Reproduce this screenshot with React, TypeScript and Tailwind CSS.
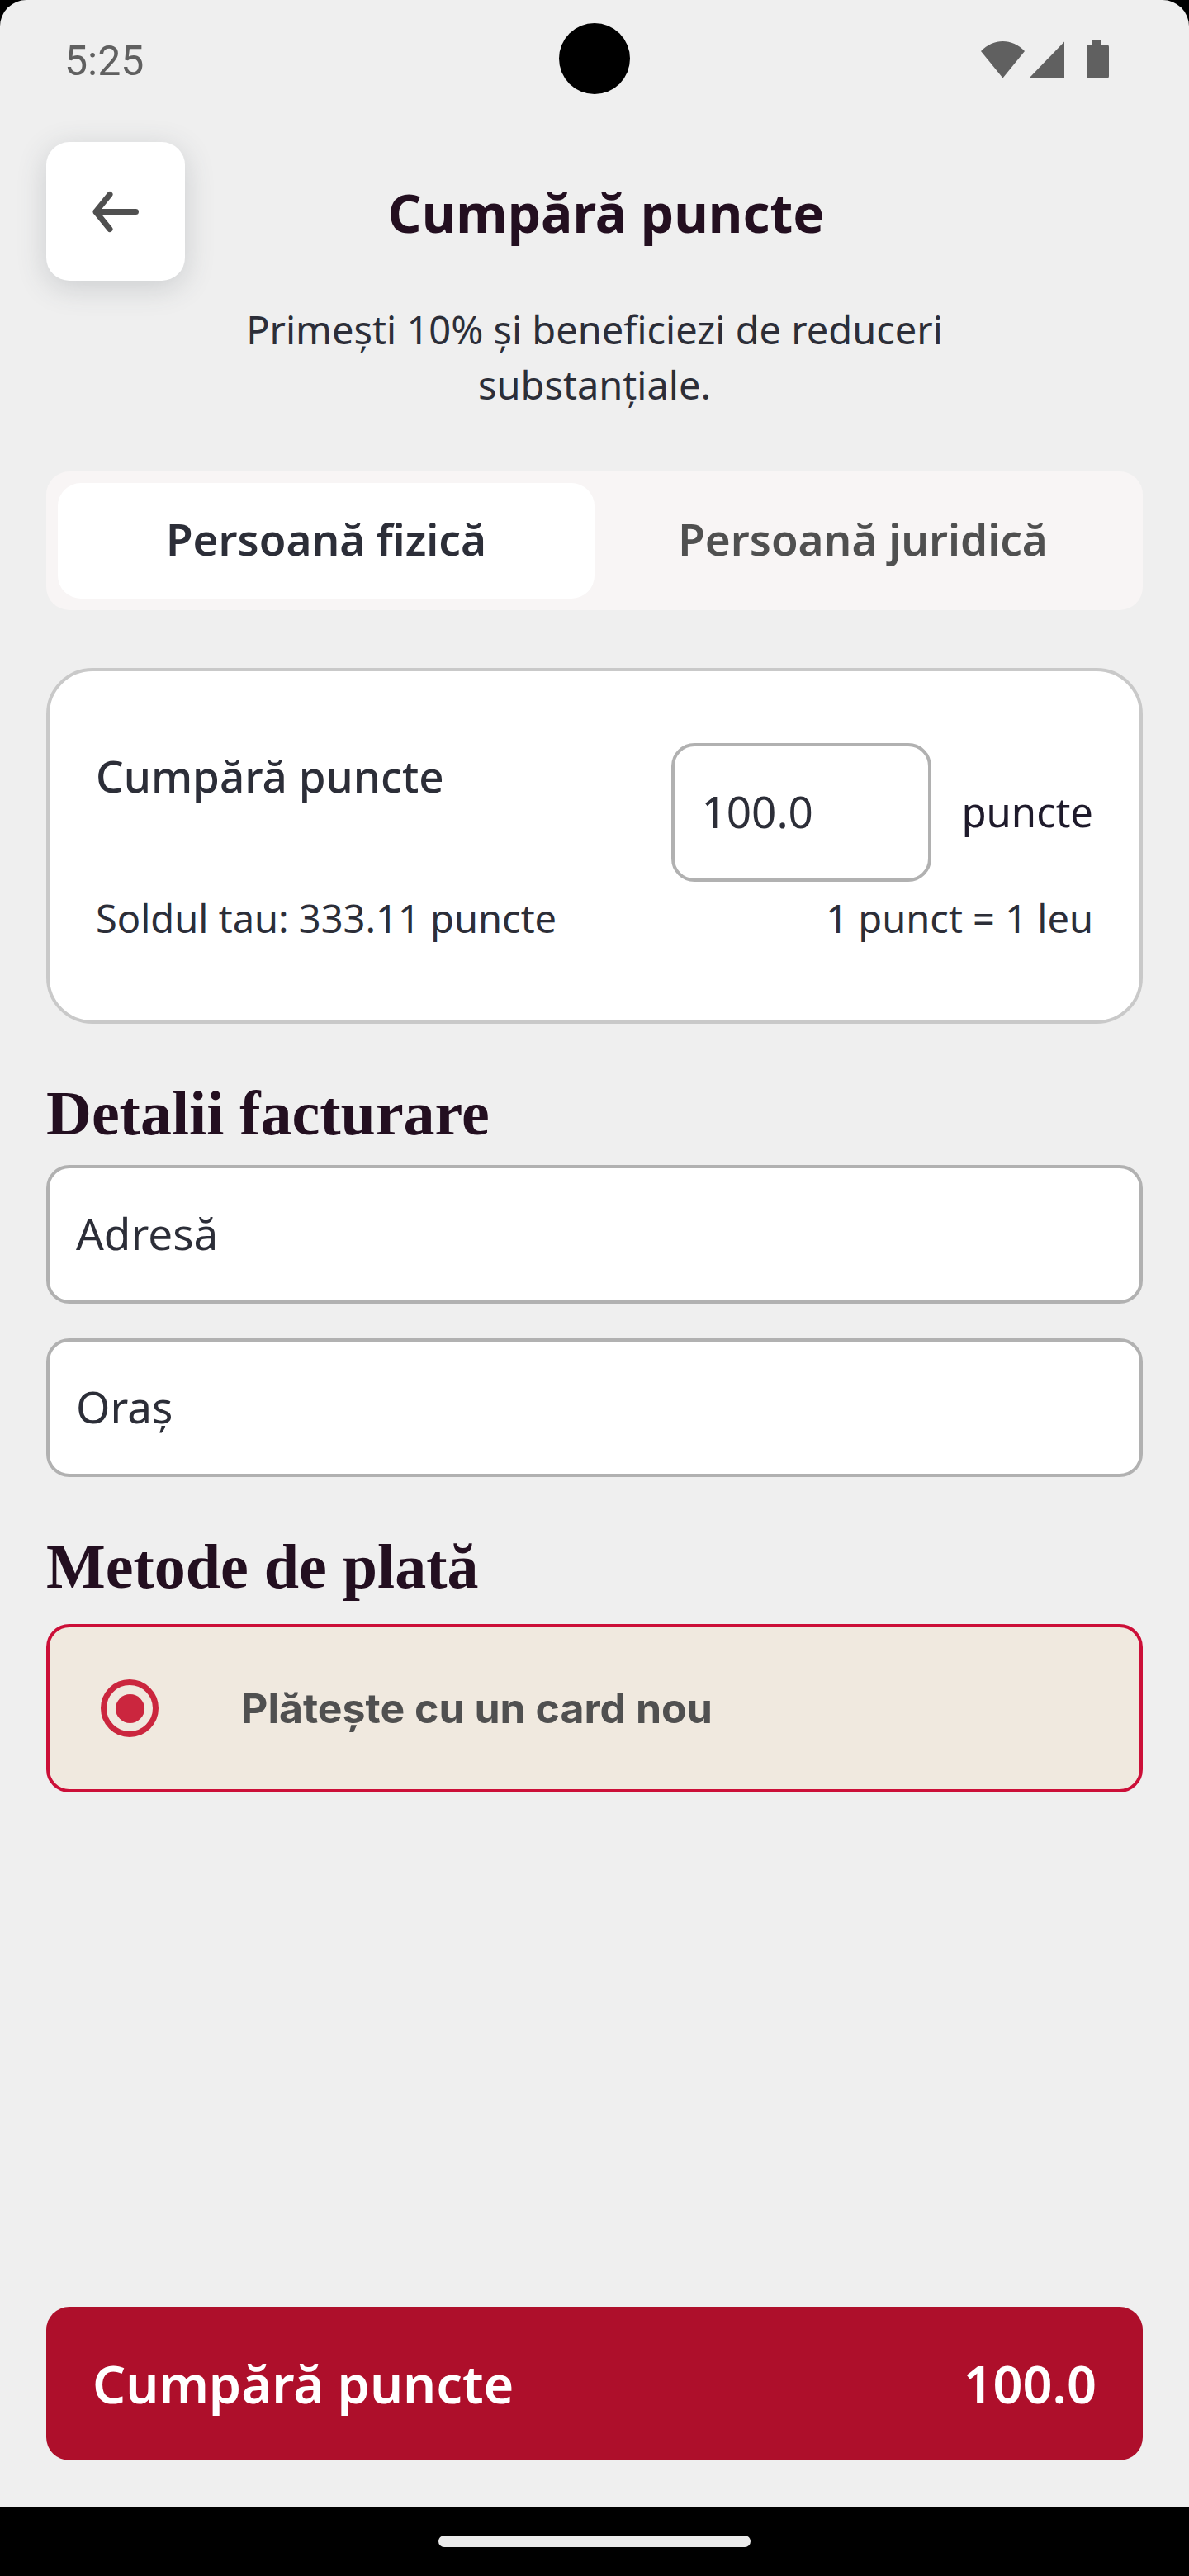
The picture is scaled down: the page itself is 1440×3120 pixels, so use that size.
import React from 'react';
import { clsx } from 'clsx';

type ClientType = 'fizica' | 'juridica';

const clientTypes: { key: ClientType; label: string }[] = [
  { key: 'fizica', label: 'Persoană fizică' },
  { key: 'juridica', label: 'Persoană juridică' },
];

const StatusBar: React.FC = () => (
  <div className="relative flex h-36 items-center justify-between pl-[78px] pr-24 text-[#606060]">
    <span className="pt-1 font-['Roboto',sans-serif] text-[50px] leading-[58px]">5:25</span>
    <div className="absolute left-1/2 top-7 size-[86px] -translate-x-1/2 rounded-full bg-black" />
    <svg width="156" height="46" viewBox="0 0 156 46" fill="currentColor" aria-hidden="true">
      <path d="M0 13C15-3 38-3 53 13L26.500 45.500Z" />
      <path d="M101 1.500V46H58Z" />
      <path d="M134 0h12v5h6a3 3 0 0 1 3 3v35a3 3 0 0 1-3 3h-21a3 3 0 0 1-3-3V8a3 3 0 0 1 3-3h3z" />
    </svg>
  </div>
);

const SectionTitle: React.FC<{ children: React.ReactNode }> = ({ children }) => (
  <h2 className="mt-[66px] font-['Liberation_Serif',serif] text-[76px] font-bold leading-[84px] text-[#230f20]">
    {children}
  </h2>
);

const fieldClass =
  'h-[168px] rounded-[28px] border-4 border-[#b1b1b1] bg-white pb-1 text-[53px] text-[#2c2e38] outline-none placeholder:text-[#2c2e38]';

export default function App() {
  const [clientType, setClientType] = React.useState<ClientType>('fizica');
  const [amount, setAmount] = React.useState('100.0');
  const [address, setAddress] = React.useState('');
  const [city, setCity] = React.useState('');

  return (
    <div className="flex min-h-screen flex-col bg-black font-['Noto_Sans',sans-serif] text-[#2c2e38]">
      <div className="flex flex-1 flex-col rounded-t-[32px] bg-[#efefef]">
        <StatusBar />

        <main className="flex flex-1 flex-col px-14 pb-14 pt-7">
          <header className="flex items-center">
            <button
              type="button"
              aria-label="Înapoi"
              className="flex size-[168px] items-center justify-center rounded-[28px] bg-white text-[#505050] shadow-[0_8px_36px_rgba(60,70,80,0.2)]"
            >
              <svg width="56" height="56" viewBox="0 0 56 56" fill="none" stroke="currentColor" strokeWidth="7" strokeLinecap="round" strokeLinejoin="round" aria-hidden="true">
                <path d="M52.500 28.500H4M21 7.500L4 28.500L21 49.500" />
              </svg>
            </button>
            <h1 className="mr-[140px] flex-1 pt-1 text-center text-[64px] font-bold leading-[84px] text-[#230f20]">
              Cumpără puncte
            </h1>
          </header>

          <p className="mx-auto mt-[26px] max-w-[960px] text-center text-[47px] leading-[67px]">
            Primești 10% și beneficiezi de reduceri substanțiale.
          </p>

          <div className="mt-[71px] grid grid-cols-2 rounded-[28px] bg-[#f8f5f5] p-3.5">
            {clientTypes.map((type) => (
              <button
                key={type.key}
                type="button"
                aria-pressed={clientType === type.key}
                onClick={() => setClientType(type.key)}
                className={clsx(
                  'h-[140px] rounded-[28px] pb-1 text-[53px] font-semibold leading-[72px]',
                  clientType === type.key ? 'bg-white text-[#2c2e38]' : 'text-[#505050]'
                )}
              >
                {type.label}
              </button>
            ))}
          </div>

          <section className="mt-[70px] rounded-[56px] border-4 border-[#c9c9c9] bg-white px-14 pb-[92px] pt-[87px]">
            <div className="flex items-start justify-between">
              <label htmlFor="amount" className="pt-1 text-[53px] font-medium leading-[72px]">
                Cumpără puncte
              </label>
              <div className="flex items-center gap-9 text-[49px] text-[#1e1a2b]">
                <input
                  id="amount"
                  inputMode="decimal"
                  value={amount}
                  onChange={(e) => setAmount(e.target.value)}
                  className={clsx(fieldClass, 'w-[315px] px-8')}
                />
                <span>puncte</span>
              </div>
            </div>
            <div className="mt-3 flex justify-between text-[47px] leading-[64px]">
              <span>Soldul tau: 333.11 puncte</span>
              <span>1 punct = 1 leu</span>
            </div>
          </section>

          <SectionTitle>Detalii facturare</SectionTitle>
          <div className="mt-[21px] flex flex-col gap-[42px]">
            <input
              aria-label="Adresă"
              placeholder="Adresă"
              value={address}
              onChange={(e) => setAddress(e.target.value)}
              className={clsx(fieldClass, 'w-full px-8')}
            />
            <input
              aria-label="Oraș"
              placeholder="Oraș"
              value={city}
              onChange={(e) => setCity(e.target.value)}
              className={clsx(fieldClass, 'w-full px-8')}
            />
          </div>

          <SectionTitle>Metode de plată</SectionTitle>
          <label className="mt-7 flex h-[204px] items-center gap-[100px] rounded-[28px] border-4 border-[#cc0f38] bg-[#f0e9df] px-[62px]">
            <input
              type="radio"
              name="payment"
              defaultChecked
              className="flex size-[70px] shrink-0 appearance-none items-center justify-center rounded-full border-[7px] border-[#cb263e] checked:before:size-[35px] checked:before:rounded-full checked:before:bg-[#cb263e] checked:before:content-['']"
            />
            <span className="font-['Inter',sans-serif] text-[50px] font-bold text-[#505050]">
              Plătește cu un card nou
            </span>
          </label>

          <button
            type="button"
            className="mt-auto flex h-[186px] items-center justify-between rounded-[28px] bg-[#ae0f2b] px-14 text-[63px] font-semibold text-white"
          >
            <span>Cumpără puncte</span>
            <span>{amount}</span>
          </button>
        </main>
      </div>

      <div className="flex h-[84px] items-center justify-center">
        <div className="h-3.5 w-[378px] rounded-full bg-[#ebebeb]" />
      </div>
    </div>
  );
}
